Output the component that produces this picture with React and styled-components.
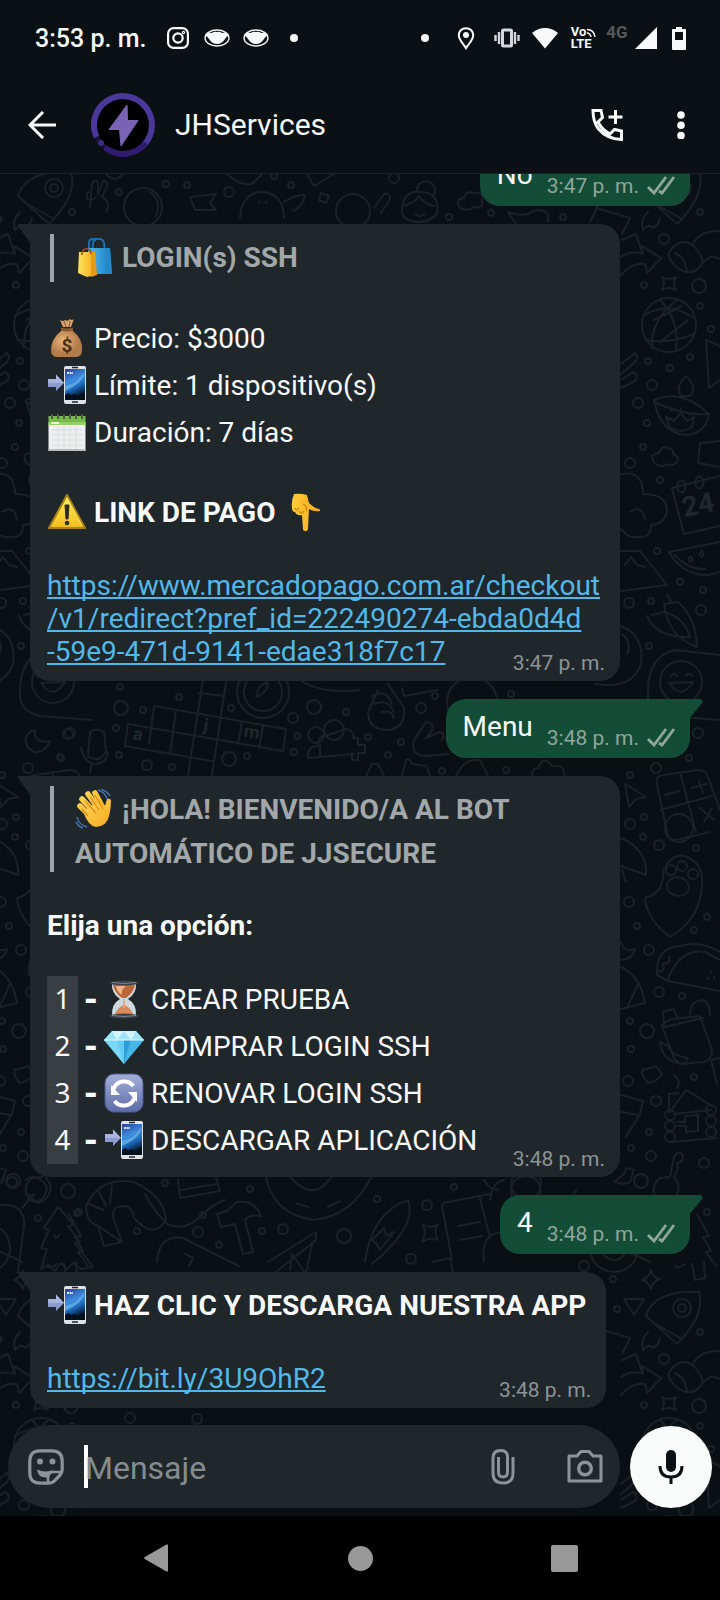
import React from "react";
import styled, { createGlobalStyle } from "styled-components";

const GlobalStyle = createGlobalStyle`
  *, *::before, *::after { box-sizing: border-box; }
  body { margin: 0; background: #0b1014; font-family: Roboto, "Noto Sans", sans-serif; }
`;

/* ---------- page frame ---------- */

const Screen = styled.div`
  height: 100vh;
  display: flex;
  flex-direction: column;
  background: #0b1014;
  color: #f7f9fa;
  overflow: hidden;
`;

const StatusBar = styled.div`
  flex: none;
  height: 76px;
  padding: 0 25px 0 35px;
  display: flex;
  align-items: center;
  justify-content: space-between;
`;

const StatusGroup = styled.div`
  display: flex;
  align-items: center;
`;

const Clock = styled.time`
  font-size: 25px;
  line-height: 30px;
  font-weight: 500;
  padding: 2px 18px 0 0;
`;

const Slot = styled.span`
  width: ${(p) => p.$w}px;
  height: 26px;
  display: flex;
  align-items: center;
  justify-content: center;
`;

const Volte = styled.span`
  display: flex;
  flex-direction: column;
  font-size: 13px;
  line-height: 12px;
  font-weight: 700;
`;

const VolteTop = styled.span`
  display: flex;
  align-items: center;
`;

const Network = styled.span`
  align-self: flex-start;
  font-size: 17px;
  line-height: 14px;
  font-weight: 700;
  color: #54585b;
`;

const Header = styled.header`
  flex: none;
  height: 98px;
  padding: 0 35px 0 28px;
  display: flex;
  align-items: center;
  border-bottom: 1px solid #1c2226;
`;

const IconButton = styled.button`
  flex: none;
  display: flex;
  padding: 0;
  border: 0;
  background: none;
  color: ${(p) => p.$color || "#f7f9fa"};
  cursor: pointer;
`;

const Avatar = styled.svg`
  flex: none;
  width: 64px;
  height: 64px;
  margin: 0 20px 0 35px;
`;

const Title = styled.h1`
  flex: 1;
  margin: 0;
  font-size: 30px;
  line-height: 36px;
  font-weight: 400;
`;

const HeaderActions = styled.div`
  display: flex;
  align-items: center;
  gap: 54px;
`;

/* ---------- conversation ---------- */

const Conversation = styled.section`
  flex: 1;
  min-height: 0;
  display: flex;
  flex-direction: column;
  position: relative;
  background: #0a0f13;
  overflow: hidden;
`;

const Wallpaper = styled.svg`
  position: absolute;
  inset: 0;
  width: 100%;
  height: 100%;
`;

const Thread = styled.main`
  position: relative;
  flex: 1;
  min-height: 0;
  display: flex;
  flex-direction: column;
  justify-content: flex-end;
  gap: 18px;
  padding: 0 30px 17px;
  overflow: hidden;
`;

const Received = styled.article`
  position: relative;
  align-self: flex-start;
  flex: none;
  display: grid;
  width: ${(p) => (p.$wide ? "calc(100% - 70px)" : "auto")};
  padding: 10px 15px 6px 17px;
  border-radius: 0 20px 20px 20px;
  background: #20272b;

  &::before {
    content: "";
    position: absolute;
    top: 0;
    left: -12px;
    width: 13px;
    height: 20px;
    background: inherit;
    clip-path: polygon(0 0, 100% 0, 100% 100%, 2px 5px);
  }
`;

const Sent = styled.article`
  position: relative;
  align-self: flex-end;
  flex: none;
  display: flex;
  align-items: flex-end;
  gap: 14px;
  padding: 11px 15px 8px 17px;
  border-radius: 20px 0 20px 20px;
  background: #144d37;

  &::before {
    content: "";
    position: absolute;
    top: 0;
    right: -13px;
    width: 14px;
    height: 20px;
    background: inherit;
    clip-path: polygon(0 0, 12px 0, 100% 3px, 0 100%);
  }
`;

const SentText = styled.p`
  margin: 0;
  padding-bottom: 7px;
  font-size: 28px;
  line-height: 33px;
`;

const Body = styled.div`
  grid-area: 1 / 1;
  padding: 0 5px 7px 0;
  font-size: 28px;
  line-height: 33px;
`;

const Meta = styled.div`
  grid-area: 1 / 1;
  align-self: end;
  justify-self: end;
  display: flex;
  align-items: center;
  gap: 8px;
  font-size: 21px;
  line-height: 24px;
  color: ${(p) => (p.$sent ? "#8ea69c" : "#8c9396")};
`;

const Line = styled.p`
  margin: 0;
  display: flex;
  align-items: center;
  gap: 7px;
  min-height: 47px;
  font-weight: ${(p) => (p.$bold ? 700 : 400)};
`;

const TallLine = styled.p`
  margin: 0;
  display: flex;
  align-items: center;
  min-height: 38px;
  padding-top: 3px;
  font-weight: 700;
`;

const Gap = styled.div`
  height: 33px;
`;

const Quote = styled.blockquote`
  margin: 0 0 0 3px;
  padding: 0 0 1px 21px;
  border-left: 4px solid #9fa4a6;
  color: #a2a7a9;
`;

const Link = styled.a`
  color: #53b8e8;
  text-decoration: underline;
  text-decoration-thickness: 2px;
  text-underline-offset: 2px;
  text-decoration-skip-ink: none;
`;

const Options = styled.ul`
  list-style: none;
  margin: 0;
  padding: 0;
`;

const Option = styled.li`
  display: flex;
  align-items: center;
  height: 47px;
`;

const Key = styled.code`
  width: 31px;
  height: 47px;
  line-height: 45px;
  text-align: center;
  background: #393e42;
  font-family: "Noto Sans", sans-serif;
`;

const Dash = styled.b`
  width: 26px;
  text-align: center;
  font-size: 34px;
  font-weight: 900;
`;

const OptionLabel = styled.span`
  padding-left: 7px;
`;

const Emoji = styled.svg`
  flex: none;
  width: 40px;
  height: 40px;
  margin-bottom: 2px;
`;

/* ---------- composer and system bar ---------- */

const Composer = styled.form`
  position: relative;
  flex: none;
  display: flex;
  align-items: center;
  gap: 10px;
  padding: 0 8px 8px;
`;

const Field = styled.div`
  flex: 1;
  min-width: 0;
  height: 83px;
  display: flex;
  align-items: center;
  padding: 0 17px 0 20px;
  border-radius: 42px;
  background: #20272b;
`;

const Caret = styled.span`
  flex: none;
  width: 4px;
  height: 43px;
  margin-left: 20px;
  background: #ffffff;
`;

const Input = styled.input`
  flex: 1;
  min-width: 0;
  padding: 2px 0 0;
  border: 0;
  outline: 0;
  background: none;
  color: #f7f9fa;
  font: 400 32px/40px Roboto, sans-serif;
  margin-left: -3px;
  &::placeholder { color: #858c90; opacity: 1; }
`;

const FieldActions = styled.div`
  display: flex;
  align-items: center;
  gap: 52px;
`;

const MicButton = styled.button`
  flex: none;
  display: flex;
  align-items: center;
  justify-content: center;
  width: 82px;
  height: 82px;
  padding: 0;
  border: 0;
  border-radius: 50%;
  background: #fafbfb;
  color: #0b1014;
`;

const SystemNav = styled.nav`
  flex: none;
  height: 84px;
  padding: 0 54px;
  display: grid;
  grid-template-columns: repeat(3, 1fr);
  place-items: center;
  background: #000000;
`;

/* ---------- emoji drawings ---------- */

const Bags = () => (
  <Emoji viewBox="0 0 40 40" aria-label="bolsas">
    <defs>
      <linearGradient id="bagB"><stop stopColor="#4db8ef" /><stop offset="1" stopColor="#1c7fc0" /></linearGradient>
      <linearGradient id="bagY"><stop stopColor="#ffe25a" /><stop offset="1" stopColor="#f2a81c" /></linearGradient>
    </defs>
    <path d="M14 15V6q0-4 4-4h6q4 0 5 4l1 9M17 15l1-8q0-4 3-4" fill="none" stroke="#1b6fb3" strokeWidth="2" />
    <path d="M13 11h22l2 26H16z" fill="url(#bagB)" />
    <path d="M31 11h4l2 26-7-1z" fill="#2389cb" />
    <path d="M4 15h16l1 23-9 2-9-4z" fill="url(#bagY)" />
    <path d="M16 15l4-1 2 24-6 2z" fill="#e39a17" />
    <path d="M7 18v-3q2-4 6-3 3 1 3 5" fill="none" stroke="#9a4b1b" strokeWidth="1.6" />
  </Emoji>
);

const Money = () => (
  <Emoji viewBox="0 0 40 40" aria-label="dinero">
    <defs>
      <radialGradient id="sack" cx=".4" cy=".4"><stop stopColor="#e8b37c" /><stop offset="1" stopColor="#b27c49" /></radialGradient>
    </defs>
    <path d="M13 2q3 2 5 0 3 2 5-1 2 2 4 0l-3 8H16z" fill="#d8a16b" />
    <path d="M17 3l2 6M23 3l-1 6" stroke="#8c5c33" fill="none" />
    <path d="M15 12h10q11 9 10 20 0 7-6 7H10q-6 0-6-7 0-11 11-20z" fill="url(#sack)" />
    <path d="M14 9.500q6 2 12 0v3q-6 2-12 0z" fill="#8c5a30" />
    <text x="20" y="34" textAnchor="middle" fontSize="19" fontWeight="700" fill="#4b2f1b">$</text>
  </Emoji>
);

const PhoneIn = () => (
  <Emoji viewBox="0 0 40 40" aria-label="móvil con flecha">
    <defs>
      <linearGradient id="phoneScr" x1="0" y1="0" x2=".3" y2="1">
        <stop stopColor="#2c3f95" /><stop offset=".45" stopColor="#3f8fe0" /><stop offset=".7" stopColor="#1a66b5" /><stop offset="1" stopColor="#041222" />
      </linearGradient>
    </defs>
    <path d="M1 14h8V9.500l8 8.500-8 8v-4H1z" fill="#8d9bd0" />
    <path d="M1 14h8V9.500l8 8.500H1z" fill="#aab5df" />
    <rect x="17" y="1" width="22" height="38" rx="2" fill="#dfe3e8" />
    <rect x="18" y="4" width="20" height="31" fill="url(#phoneScr)" />
    <path d="M18 21q12-2 19-13-1 10-19 18z" fill="#7fc3f4" opacity=".6" />
    <path d="M18 30l3-2 3 2 4-1 3 2 4-3 3 1v6H18z" fill="#04101c" />
    <path d="M20 8h6" stroke="#dfe8ff" strokeWidth="2" strokeDasharray="2 .6" />
    <path d="M25 37h6M25 2.500h6" stroke="#23272c" strokeWidth="1.500" />
  </Emoji>
);

const Calendar = () => (
  <Emoji viewBox="0 0 40 40" aria-label="calendario">
    <rect x="1.500" y="11" width="37" height="28" fill="#eef0ef" />
    <path d="M1.500 4h37v9h-37z" fill="#79b84b" />
    <path d="M1.500 10h37v3h-37z" fill="#95cf68" />
    <path d="M4 11h8" stroke="#e9f7d9" strokeWidth="2" />
    <path d="M5 18h30M5 23h30M5 28h30M5 33h30M11 15v22M17 15v22M23 15v22M29 15v22" stroke="#d9dcdc" />
    <path d="M5 2v5M11 2v5M17 2v5M23 2v5M29 2v5M35 2v5" stroke="#4c5d45" strokeWidth="2" />
    <path d="M1.500 38h37" stroke="#b9bdbd" strokeWidth="2" />
  </Emoji>
);

const Warning = () => (
  <Emoji viewBox="0 0 40 40" aria-label="advertencia">
    <defs>
      <linearGradient id="warn" x1="0" y1="0" x2="0" y2="1"><stop stopColor="#fff05a" /><stop offset="1" stopColor="#f3bd1b" /></linearGradient>
    </defs>
    <path d="M20 3L38 36H2z" fill="url(#warn)" stroke="#a98414" strokeWidth="2" strokeLinejoin="round" />
    <path d="M20 6L35 33" stroke="#fff7a8" fill="none" opacity=".6" />
    <path d="M18 13h4l-1 14h-2z" fill="#2d2a1c" stroke="#2d2a1c" strokeLinejoin="round" />
    <circle cx="20" cy="31" r="2.300" fill="#2d2a1c" />
  </Emoji>
);

const PointDown = () => (
  <Emoji viewBox="0 0 40 40" aria-label="abajo">
    <defs>
      <linearGradient id="pd"><stop stopColor="#ffcb3b" /><stop offset="1" stopColor="#f7a91c" /></linearGradient>
    </defs>
    <path d="M11 2q7-1 13 1l2 8q5 5 10 6 2 1 1 2-6 1-11-2l-1 20q-1 3-3 2-2 0-2-2l-1-14q-5 1-7-3-3 0-3-4-1-7 2-14z" fill="url(#pd)" />
    <path d="M12 16q1 4 4 0M16 19q2 4 5 0M20 12q3 1 4 7" fill="none" stroke="#d9870f" strokeWidth="1.400" />
  </Emoji>
);

const Wave = () => (
  <Emoji viewBox="0 0 40 40" aria-label="saludo">
    <defs>
      <linearGradient id="wv" x1="0" y1="0" x2="1" y2="1"><stop stopColor="#ffd75a" /><stop offset="1" stopColor="#f7a81b" /></linearGradient>
    </defs>
    <g stroke="url(#wv)" strokeWidth="5.600" strokeLinecap="round" fill="none">
      <path d="M5 17l12 12M7 10l14 15M13 5l12 17M20 4l9 17" />
    </g>
    <path d="M8 22l13-8 8 4q2-3 3-8 4-1 4 2 0 8-2 15-2 10-13 11-8-1-13-16z" fill="url(#wv)" />
    <path d="M10 12l11 12M15 8l9 13M20 6l8 14M7 20l6 7" stroke="#d98b17" strokeWidth="1.200" fill="none" />
    <path d="M23 1q8 3 9 9M26 0q7 3 9 7M2 28q1 7 10 10M1 33q3 5 7 6" stroke="#466fae" strokeWidth="1.500" fill="none" />
  </Emoji>
);

const Hourglass = () => (
  <Emoji viewBox="0 0 40 40" aria-label="reloj de arena">
    <path d="M8 4h24q1 10-8 16 9 5 8 17H8q-1-12 8-17-9-6-8-16z" fill="#cdd9df" />
    <path d="M9 6h22q-1 7-9 13h-4Q10 13 9 6z" fill="#b9683a" />
    <path d="M12 7h10q-5 3-4 9-5-3-6-9z" fill="#f0b48a" />
    <path d="M20 26q6 2 9 9H11q3-7 9-9z" fill="#d98a58" />
    <path d="M20 20v9" stroke="#e5a479" strokeWidth="1.500" />
    <ellipse cx="20" cy="4" rx="14" ry="2.500" fill="#3b4049" />
    <ellipse cx="20" cy="37" rx="14" ry="2.500" fill="#3b4049" />
    <path d="M8 3.500q12 2 24 0M8 36.500q12 2 24 0" stroke="#7c8591" fill="none" />
  </Emoji>
);

const Gem = () => (
  <Emoji viewBox="0 0 40 40" aria-label="gema">
    <path d="M8 5h24l8 9-20 24L0 14z" fill="#45b6e8" />
    <path d="M8 5h24l8 9H0z" fill="#9fe3fb" />
    <path d="M8 5l5 9 7-9 7 9 5-9z" fill="#d4f5ff" />
    <path d="M13 14h14l-7 24z" fill="#62cdf3" />
    <path d="M20 14h7l-7 24z" fill="#2f9ed6" />
    <path d="M0 14h13l7 24z" fill="#79d7f7" />
    <path d="M0 14h40" stroke="#e3faff" />
  </Emoji>
);

const Renew = () => (
  <Emoji viewBox="0 0 40 40" aria-label="renovar">
    <defs>
      <linearGradient id="rn" x1="0" y1="0" x2="0" y2="1"><stop stopColor="#a3aed8" /><stop offset="1" stopColor="#5d6ca8" /></linearGradient>
    </defs>
    <rect x="1" y="1" width="38" height="38" rx="9" fill="url(#rn)" stroke="#4d5c97" />
    <path d="M9.500 16a11.500 11.500 0 0 1 20-3M30.500 25a11.500 11.500 0 0 1-20 3" fill="none" stroke="#ffffff" strokeWidth="4" />
    <path d="M7 12v10h9zM33 29V19h-9z" fill="#ffffff" />
  </Emoji>
);

/* ---------- interface icons ---------- */

const Ticks = () => (
  <svg width="28" height="20" viewBox="0 0 28 20" fill="none" stroke="#8ea69c" strokeWidth="2.800" aria-label="entregado">
    <path d="M1 11l6 6L19 1M12 15l3 2L27 1" />
  </svg>
);

const FaceIcon = () => (
  <svg width="26" height="18" viewBox="0 0 26 18">
    <ellipse cx="13" cy="9" rx="12" ry="8" fill="none" stroke="#f7f9fa" strokeWidth="1.300" />
    <path d="M1 6Q4 3 8 4q2-2 5-1 3-1 5 1 4-1 7 2-2 1-4 4-3 5-8 5t-8-5Q3 7 1 6z" fill="#f7f9fa" />
  </svg>
);

const Dot = () => (
  <svg width="8" height="8"><circle cx="4" cy="4" r="4" fill="#f7f9fa" /></svg>
);

/* ---------- wallpaper ---------- */

const CIRCLES = {
  4: [
    [119, 192], [166, 184], [187, 185], [274, 176], [291, 185], [449, 217], [491, 213], [563, 217], [700, 212],
    [644, 285], [700, 306], [711, 329], [648, 361], [690, 357], [670, 368], [647, 423], [643, 447], [660, 480],
    [657, 551], [680, 582], [703, 590], [651, 601], [649, 646], [689, 758], [630, 775], [644, 817], [643, 837],
    [696, 848], [637, 926], [707, 917], [694, 930], [682, 996], [630, 1021], [631, 1049], [694, 1077],
    [649, 1132], [631, 1148], [707, 1212], [120, 687], [143, 710], [179, 697], [116, 728], [60, 757],
    [119, 755], [172, 767], [247, 756], [231, 708], [346, 712], [297, 736], [294, 752], [435, 696], [511, 694],
    [368, 737], [401, 742], [388, 755], [442, 771], [506, 770], [165, 1183], [38, 1218], [77, 1213], [137, 1231],
    [262, 1231], [250, 1189], [203, 1215], [219, 1245], [377, 1199], [454, 1187], [613, 1279], [617, 1309],
  ],
  6: [
    [229, 192], [664, 239], [394, 178], [652, 385], [638, 403], [630, 463], [629, 603], [701, 610], [698, 733],
    [656, 768], [630, 824], [659, 845], [629, 902], [649, 950], [659, 992], [628, 1081], [656, 1101],
    [651, 1156], [704, 1163], [68, 734], [147, 765], [293, 718], [421, 708], [198, 1232], [283, 1229],
    [427, 1205], [411, 1259], [584, 1266], [130, 298], [197, 299], [12, 1182],
  ],
  8: [[699, 286], [121, 708], [229, 759], [314, 707], [647, 1031], [641, 1181], [68, 1191], [344, 1236]],
};

const DOODLES = [
  /* rocket */
  "M646 196Q654 170 699 172Q706 195 677 224L646 196M652 202L680 218M648 212q-8 8-5 18 6-7 10-2 6-3 7-10",
  /* victory hand, lens, bowl, banner */
  "M90 208L92 184Q96 177 98 184L98 194L103 181Q108 180 107 187L102 197Q112 202 106 212M90 192q-5 0-3 6 5 4 8 0",
  "M106 174q8 10 17 0M150 192q12 8 6 24M227 174Q240 186 252 184L262 174M307 175L314 186L334 174M190 197L216 194L210 203L216 210H195z",
  /* horned creature */
  "M240 218q2-27 24-26 20 3 20 26M284 202q12-8 21-7-2 12-12 16M259 202v1M266 202v1",
  "M321 193l8 3-3 7-7-3zM374 208l10-14q6-2 6 5l-9 14",
  /* girl, cloud, fish, frame */
  "M402 212q0-22 18-20 20 0 17 22-5 6-17 8-16 0-18-10zM402 206q12-2 17-10 6 9 16 10M415 214q5 4 10 0M417 190a9 9 0 1 1 16 6",
  "M460 208q-6-8 4-10 2-8 10-5 10-2 8 8 2 8-8 6-6 5-14 1M508 212q12 4 20 2 12-8 20 0v8M508 212l8 12M598 206L590 222M596 208l34 10-8 16",
  /* card, bent arrow, mitten */
  "M622 240l14-6 6 18M621 257Q630 250 643 254L642 246L661 258L647 273L645 264Q632 262 621 275",
  "M668 254Q680 235 694 246Q702 256 703 262Q697 274 686 272Q672 268 668 254zM675 253q10 4 12 18M692 245Q700 230 720 231M703 262L712 256L720 259",
  "M662 277q7 4 14 0-4 6 0 13-7-4-14 0 4-7 0-13z",
  /* globe */
  "M643 316Q668 300 694 318M645 340Q670 344 694 334M660 300Q680 320 676 350M678 299Q650 320 652 348M654 320L682 306M660 342L688 320",
  "M621 364l14-11q4 4 0 9l-14 12M621 380l12-8q6 3 2 9l-14 7",
  /* oil lamp, small cloud */
  "M654 400Q683 388 709 415Q705 434 685 435Q660 432 654 400zM654 402q30 14 55 12M681 396q-6-10 5-20 12 12 4 20zM666 417l8 4 7-8 6 8 7-4-2 10q-13 8-23-1zM671 410v1M681 409v1M690 414v1",
  "M654 462q-5-8 5-9 2-8 9-5 6 1 5 6 8 3 3 9-5 4-9 1-6 5-13-2zM621 474q22-4 22 20 24 0 24 17-2 13-16 14 0 14-14 12-8 2-16-8M630 512q12-8 15 8",
  "M706 340l14 6M706 340l3 48 11-8M720 441l-20 2-2 20 22 4",
  /* day calendar */
  "M672 488l48-12M672 488l12 46 36-8M684 482a4 6 0 1 0 1 2M702 478a4 6 0 1 0 1 2",
  /* pyramid, melon */
  "M621 551h19L667 585 621 591M625 565l6-8 6 8 8 2M669 552L720 542M669 552Q682 575 708 575L720 572M675 555Q688 570 706 569M691 556q-4 2-1 6 4-1 1-6zM702 551q-4 2-1 6 4-1 1-6z",
  /* chillies, moon */
  "M647 616Q656 638 690 637Q684 617 664 612L652 615M664 604Q668 637 697 647Q696 618 678 602L664 604M671 602l-4-8M621 626Q645 636 641 664Q632 690 595 684M622 634q10 8 5 20",
  /* smile sticker */
  "M648 698Q646 656 675 650L720 655M648 698Q650 712 668 716L720 720M671 676q3-5 6 0M686 676q3-5 6 0M669 683q12 18 24-1z",
  /* cursor and calculator */
  "M625 784L646 797L636 799L629 807zM657 784Q655 776 663 775L698 770Q706 770 708 777L720 810M657 784l10 48Q668 840 676 840L710 832M680 772l16 60M660 810l52-14M665 795l14-4M692 788l14-4M699 781l4 12M700 808l14 12M712 808l-8 14",
  /* umbrella, paw, shield */
  "M621 838Q648 850 646 875L621 866M622 870l4 12M645 898Q664 893 663 872Q670 854 684 856Q704 862 702 885Q700 920 670 937Q647 920 645 898z",
  "M667 886q1-9 11-9 9 1 11 10-1 9-11 9-10-1-11-10z",
  /* taco, pizza, backpack */
  "M657 975Q655 948 680 946Q700 940 720 952M668 979Q680 948 705 952L720 960M657 975L668 981 720 991M657 970q8 4 6-6 8 0 6-7M711 971v1M708 978v1M714 977v1",
  "M621 967Q640 975 645 1003L621 1009M627 1008l11-24M621 943q4 10 14 6-2 10-14 11",
  "M662 1026Q666 1020 674 1019L700 1016L712 1050Q712 1060 704 1062L680 1064L674 1058zM664 1024l-1-12 10-3 5 9M665 1027l38-9M690 1015q0-14 12-15 8 2 8 16M660 1042q2 20 24 22l4-6q-16-2-20-12z",
  "M642 1070q10-2 14-4l6 8q-6 8-14 9-6-6-6-13zM711 1060l9-2M711 1060l6 24",
  /* cabin */
  "M669 1113L686 1090 712 1106M669 1113V1094l10-1M675 1114l36-4M677 1122h8v-6l13-1v16l-12 1v-6h-9M672 1142l45-4M674 1075q8 5 3 13",
  "M621 1095L643 1101 640 1114 626 1137M621 1112l18 3",
  /* key */
  "M670 1177l4-20q4-8 9-2l-1 6-5 2 1 5-4 10q8 8 2 18-8 12-20 2-6-12 4-20z",
  "M614 1182l10-8 2-6 8 2-4 12-6 2z",
  /* pocket moon, microphone */
  "M35 730Q33 744 50 741Q45 753 35 752Q24 748 26 738Q28 731 35 730zM90 732q6-5 14 0l2 20q-8 12-18 4zM81 748q4 16 15 16 10 0 12-12M92 764l-2 8",
  /* crossword */
  "M154 706L286 729L283 751M128 724L283 751M125 746L212 761M154 706L149 744M128 724l-3 22M176 710l-6 44M203 680L188 775M226 682L212 775M242 722l-4 22M263 726l-4 22M199 693l25 3",
  /* compass and people */
  "M257 697q-1-10 10-15 3 8-10 15zM318 745q0-10 10-10l18-6q8 2 8 8M308 758q-1-12 10-12M308 758l46-4M320 757v-12M352 738h6v7h7v8h-7v7h-6v-7",
  /* fists and thumbs */
  "M378 690l-10 22q0 18 20 18 18-2 16-22l-16-24M372 696q14-8 20 8M374 704q14-6 20 8M382 712q10-2 12 6M414 740q-4 16 12 16l22-2M414 740l12-18q8 0 6 8l-6 8 14-6q6 2 2 8M402 688l2 8 34-6",
  "M366 776l6-12 6 0 6 12M402 776l4-16q4-2 6 4l14 2 4 10M456 776q8-18 24-16l8 16M532 776q0-8 6-8 6-14 14-2 14-2 12 10",
  /* branch, bone, fir */
  "M300 680q20 14 60 10M0 1205q25-2 24 20l-6 48M22 1208l12-14M25 1180q10-6 16 0 10 6 2 18-8 8-14-4",
  "M58 1207L44 1228l5 2-8 18 6 1-6 20 8-4 6 6 6-8 6 6 6-6 8 6 12-2-18-24 5-1-12-16 6-1zM54 1235q2 6 5 0",
  /* shrimp */
  "M134 1182Q100 1176 86 1206Q86 1222 98 1226L122 1242 104 1246 98 1226M122 1242l-8-22q-4-14 10-14 8 0 10 12 20 22 32 2-2-24-32-38M112 1184l-2 20M98 1190l8 16M88 1204l16 6M145 1194q8 16 22 30 20 8 36-10 10-10 22-14",
  "M178 1180l2 18 40-7-4-14M181 1190l36-6",
  /* hammer, drum */
  "M217 1214l4 13 14-3 8 30 10-2-8-32q4-6 16-4-6-16-24-14l-10 9zM157 1262q2-28 26-24l56 28M268 1262l48-30v8l-40 32M290 1270l2-16 14 20 6-30M185 1254l8 4-4 8",
  "M266 1177q8 38 48 43 38-4 58-44M296 1203l12 4M328 1207l12-6M290 1177q18 20 32 10l10-10",
  /* surfboard, notebook, skate */
  "M365 1262Q372 1212 408 1200Q418 1226 372 1264M372 1240l12-12 2 8 8-4-14 18-4-7zM422 1224q8 6 16 0-5 8 0 16-8-4-16 2 6-10 0-18z",
  "M442 1206Q443 1202 448 1202L490 1194M442 1206l10 54M480 1198l10 40M458 1226l22-4M460 1240l22-4M484 1262q-4-30 20-30M490 1200q2-18 14-20M512 1196q-4-18 14-20 16 2 14 18",
  "M484 1180q6 10 14 10M576 1190l-4 8 16 4M697 1214l12 22-6 1 8 14-5 1 10 14",
  /* lower right extras */
  "M651 1270q2 8 9 9-7 2-9 10-2-7-9-9 8-3 9-10zM692 1264l3 16 10-2-1-16M685 1264q-8 6-10 2M624 1299l20 0-10 16zM600 1240q40 16 50 22M432 1262l18-4 3 14",
];

const Wallpapered = () => (
  <Wallpaper viewBox="0 174 720 1342" preserveAspectRatio="xMidYMin slice" aria-hidden="true">
    <defs>
      <g id="doodles" fill="none" stroke="#1b2226" strokeWidth="2" strokeLinecap="round" strokeLinejoin="round">
        {DOODLES.map((d, i) => (
          <path key={i} d={d} />
        ))}
        {Object.entries(CIRCLES).map(([r, list]) =>
          list.map(([x, y]) => <circle key={`${r}-${x}-${y}`} cx={x} cy={y} r={Number(r) - 1} />)
        )}
        <circle cx="143" cy="207" r="19" />
        <circle cx="682" cy="188" r="9" />
        <circle cx="682" cy="188" r="4" />
        <circle cx="353" cy="211" r="17" />
        <circle cx="669" cy="325" r="27" />
        <circle cx="681" cy="682" r="21" />
        <circle cx="472" cy="702" r="25" />
        <circle cx="263" cy="692" r="26" />
        <circle cx="263" cy="692" r="19" />
        <circle cx="316" cy="735" r="8" />
        <circle cx="334" cy="730" r="10" />
        <circle cx="671" cy="870" r="5" />
        <circle cx="682" cy="866" r="5" />
        <circle cx="693" cy="874" r="5" />
        <circle cx="679" cy="828" r="14" />
        <circle cx="526" cy="1184" r="15" />
        <circle cx="614" cy="1248" r="24" />
        <circle cx="614" cy="1248" r="12" />
        {[1115, 1126, 1137].map((y) => (
          <g key={y}>
            <circle cx="670" cy={y} r="5" />
            <circle cx="711" cy={y - 5} r="5" />
          </g>
        ))}
      </g>
    </defs>
    <use href="#doodles" />
    <use href="#doodles" x="-628" />
    <use href="#doodles" y="1120" />
    <use href="#doodles" x="-628" y="1120" />
    <g fill="#20272b" fontWeight="700" textAnchor="middle">
      <text fontSize="28" transform="translate(700 514) rotate(-12)">24</text>
      <text fontSize="18" transform="translate(137 740) rotate(9)">a</text>
      <text fontSize="18" transform="translate(205 731) rotate(9)">j</text>
      <text fontSize="18" transform="translate(251 738) rotate(9)">m</text>
    </g>
  </Wallpaper>
);

/* ---------- messages ---------- */

const SentMessage = ({ text, time }) => (
  <Sent>
    <SentText>{text}</SentText>
    <Meta $sent>
      <time>{time}</time>
      <Ticks />
    </Meta>
  </Sent>
);

const ReceivedMessage = ({ wide, time, children }) => (
  <Received $wide={wide}>
    <Body>{children}</Body>
    <Meta>
      <time>{time}</time>
    </Meta>
  </Received>
);

const MENU = [
  [Hourglass, "CREAR PRUEBA"],
  [Gem, "COMPRAR LOGIN SSH"],
  [Renew, "RENOVAR LOGIN SSH"],
  [PhoneIn, "DESCARGAR APLICACIÓN"],
];

export default function App() {
  return (
    <Screen>
      <GlobalStyle />
      <StatusBar>
        <StatusGroup>
          <Clock>3:53 p. m.</Clock>
          <Slot $w={27}>
            <svg width="22" height="22" viewBox="0 0 22 22" fill="none" stroke="#f7f9fa" strokeWidth="2.200">
              <rect x="1.100" y="1.100" width="19.800" height="19.800" rx="5.500" />
              <circle cx="11" cy="11" r="4.700" />
              <circle cx="16.500" cy="5.500" r=".6" />
            </svg>
          </Slot>
          <Slot $w={51}><FaceIcon /></Slot>
          <Slot $w={27}><FaceIcon /></Slot>
          <Slot $w={50}><Dot /></Slot>
        </StatusGroup>
        <StatusGroup>
          <Slot $w={41}><Dot /></Slot>
          <Slot $w={41}>
            <svg width="18" height="23" viewBox="0 0 18 23">
              <path d="M9 1.200c4.500 0 7.200 3.200 7.200 7 0 4.600-4.400 8.400-7.200 13-2.800-4.600-7.200-8.400-7.200-13 0-3.800 2.700-7 7.200-7z" fill="none" stroke="#f7f9fa" strokeWidth="2" />
              <circle cx="9" cy="8" r="3" fill="#f7f9fa" />
            </svg>
          </Slot>
          <Slot $w={41}>
            <svg width="26" height="20" viewBox="0 0 26 20" fill="none" stroke="#d5d8da" strokeWidth="2.400">
              <rect x="8.500" y="2" width="9" height="16" rx="1" strokeWidth="3" />
              <path d="M5 4v12M21 4v12M1.500 7v6M24.500 7v6" />
            </svg>
          </Slot>
          <Slot $w={35}>
            <svg width="26" height="22" viewBox="0 0 26 22"><path d="M0 6Q6 1 13 1t13 5L13 21.500z" fill="#f7f9fa" /></svg>
          </Slot>
          <Slot $w={43}>
            <Volte>
              <VolteTop>
                Vo
                <svg width="10" height="9" viewBox="0 0 10 9" fill="none" stroke="#f7f9fa" strokeWidth="1.500">
                  <path d="M1 5q3 0 4 4M1 1.500q7 0 8 7.500" />
                </svg>
              </VolteTop>
              <span>LTE</span>
            </Volte>
          </Slot>
          <Slot $w={24}><Network>4G</Network></Slot>
          <Slot $w={33}>
            <svg width="22" height="22" viewBox="0 0 22 22"><path d="M22 0v22H0z" fill="#f7f9fa" /></svg>
          </Slot>
          <Slot $w={33}>
            <svg width="14" height="23" viewBox="0 0 14 23">
              <path fillRule="evenodd" d="M4 0h6v2h3q1 0 1 1v19q0 1-1 1H1q-1 0-1-1V3q0-1 1-1h3zM3 5v8h8V5z" fill="#f7f9fa" />
            </svg>
          </Slot>
        </StatusGroup>
      </StatusBar>

      <Header>
        <IconButton type="button" aria-label="Atrás">
          <svg width="28" height="28" viewBox="0 0 28 28" fill="none" stroke="currentColor" strokeWidth="3">
            <path d="M28 14H3M15 1L2 14l13 13" />
          </svg>
        </IconButton>
        <Avatar viewBox="0 0 64 64" aria-label="Foto de JHServices">
          <circle cx="32" cy="32" r="31.500" fill="#17132b" />
          <circle cx="32" cy="32" r="26" fill="#000000" />
          <path d="M5.500 44A29 29 0 1 1 53 52" fill="none" stroke="#4b389b" strokeWidth="6" />
          <path d="M53 52A29 29 0 0 1 16 56" fill="none" stroke="#2f1b70" strokeWidth="6" strokeLinecap="round" />
          <circle cx="10" cy="50" r="3" fill="#3d2b86" />
          <path d="M36 12L18 36.500h10.500L30 53 47 27.500H36.500z" fill="#7863b5" stroke="#7863b5" strokeLinejoin="round" />
        </Avatar>
        <Title>JHServices</Title>
        <HeaderActions>
          <IconButton type="button" aria-label="Llamar">
            <svg width="32" height="34" viewBox="0 0 32 34" fill="none" stroke="currentColor" strokeWidth="3">
              <path d="M2 2.500h8l1.500 7-4.500 4.500q4 8 12 12l4.500-4.500 7 1.500v8.500Q16 31 7.500 21 2 14 2 2.500zM24.500 2v14M17.500 9h14" />
            </svg>
          </IconButton>
          <IconButton type="button" aria-label="Más opciones">
            <svg width="8" height="28" viewBox="0 0 8 28" fill="currentColor">
              <circle cx="4" cy="4" r="3.800" /><circle cx="4" cy="14.300" r="3.800" /><circle cx="4" cy="24.600" r="3.800" />
            </svg>
          </IconButton>
        </HeaderActions>
      </Header>

      <Conversation>
        <Wallpapered />
        <Thread>
          <SentMessage text="No" time="3:47 p. m." />

          <ReceivedMessage wide time="3:47 p. m.">
            <Quote>
              <Line $bold><Bags />LOGIN(s) SSH</Line>
            </Quote>
            <Gap />
            <Line><Money />Precio: $3000</Line>
            <Line><PhoneIn />Límite: 1 dispositivo(s)</Line>
            <Line><Calendar />Duración: 7 días</Line>
            <Gap />
            <Line $bold><Warning />LINK DE PAGO<PointDown /></Line>
            <Gap />
            <Link href="https://www.mercadopago.com.ar/checkout/v1/redirect?pref_id=222490274-ebda0d4d-59e9-471d-9141-edae318f7c17">
              https://www.mercadopago.com.ar/checkout
              <br />
              /v1/redirect?pref_id=222490274-ebda0d4d
              <br />
              -59e9-471d-9141-edae318f7c17
            </Link>
          </ReceivedMessage>

          <SentMessage text="Menu" time="3:48 p. m." />

          <ReceivedMessage wide time="3:48 p. m.">
            <Quote>
              <Line $bold><Wave />¡HOLA! BIENVENIDO/A AL BOT</Line>
              <TallLine>AUTOMÁTICO DE JJSECURE</TallLine>
            </Quote>
            <Gap />
            <TallLine>Elija una opción:</TallLine>
            <Gap />
            <Options>
              {MENU.map(([Icon, label], i) => (
                <Option key={label}>
                  <Key>{i + 1}</Key>
                  <Dash>-</Dash>
                  <Icon />
                  <OptionLabel>{label}</OptionLabel>
                </Option>
              ))}
            </Options>
          </ReceivedMessage>

          <SentMessage text="4" time="3:48 p. m." />

          <ReceivedMessage time="3:48 p. m.">
            <Line $bold><PhoneIn />HAZ CLIC Y DESCARGA NUESTRA APP</Line>
            <Gap />
            <Link href="https://bit.ly/3U9OhR2">https://bit.ly/3U9OhR2</Link>
          </ReceivedMessage>
        </Thread>

        <Composer onSubmit={(e) => e.preventDefault()}>
          <Field>
            <IconButton type="button" aria-label="Stickers" $color="#8d9497">
              <svg width="36" height="36" viewBox="0 0 36 36" fill="none" stroke="currentColor" strokeWidth="3.200">
                <path d="M12 1.800h12q10.200 0 10.200 10.200v8q0 4-3 7l-5 5q-2 2.200-6 2.200h-8Q1.800 34.200 1.800 24V12Q1.800 1.800 12 1.800z" />
                <path d="M20 34v-5q0-6 6-6h8" strokeWidth="2.600" />
                <path d="M9 20.500q9 4 17 0-5 3-6 8-10 1-11-8z" fill="currentColor" stroke="none" />
                <circle cx="12" cy="12.500" r="3" fill="currentColor" stroke="none" />
                <circle cx="24.500" cy="12.500" r="3" fill="currentColor" stroke="none" />
              </svg>
            </IconButton>
            <Caret />
            <Input aria-label="Mensaje" placeholder="Mensaje" />
            <FieldActions>
              <IconButton type="button" aria-label="Adjuntar" $color="#8d9497">
                <svg width="24" height="36" viewBox="0 0 24 36" fill="none" stroke="currentColor" strokeWidth="3">
                  <path d="M22 8v16q0 10-10 10T2 24V9q0-7.500 7.500-7.500T16.500 9v14q0 5-4.500 5t-4.500-5V8" />
                </svg>
              </IconButton>
              <IconButton type="button" aria-label="Cámara" $color="#8d9497">
                <svg width="36" height="33" viewBox="0 0 36 33" fill="none" stroke="currentColor" strokeWidth="3">
                  <path d="M2 6h8l4-4.500h8L26 6h8v25H2z" strokeLinejoin="round" />
                  <circle cx="18" cy="18.500" r="6.300" strokeWidth="3.400" />
                </svg>
              </IconButton>
            </FieldActions>
          </Field>
          <MicButton type="button" aria-label="Grabar audio">
            <svg width="26" height="34" viewBox="0 0 26 34">
              <rect x="8" y="0" width="10" height="22" rx="5" fill="currentColor" />
              <path d="M2 16q0 11 11 11t11-11M13 27v7" fill="none" stroke="currentColor" strokeWidth="3" />
            </svg>
          </MicButton>
        </Composer>
      </Conversation>

      <SystemNav>
        <IconButton type="button" aria-label="Volver" $color="#989898">
          <svg width="24" height="28" viewBox="0 0 24 28" fill="currentColor"><path d="M22.500.5Q24 0 24 1.500v25q0 1.500-1.500 1L.8 15Q-.5 14 .8 13z" /></svg>
        </IconButton>
        <IconButton type="button" aria-label="Inicio" $color="#989898">
          <svg width="25" height="25" viewBox="0 0 25 25" fill="currentColor"><circle cx="12.500" cy="12.500" r="12.500" /></svg>
        </IconButton>
        <IconButton type="button" aria-label="Recientes" $color="#989898">
          <svg width="27" height="27" viewBox="0 0 27 27" fill="currentColor"><rect width="27" height="27" rx="2" /></svg>
        </IconButton>
      </SystemNav>
    </Screen>
  );
}
